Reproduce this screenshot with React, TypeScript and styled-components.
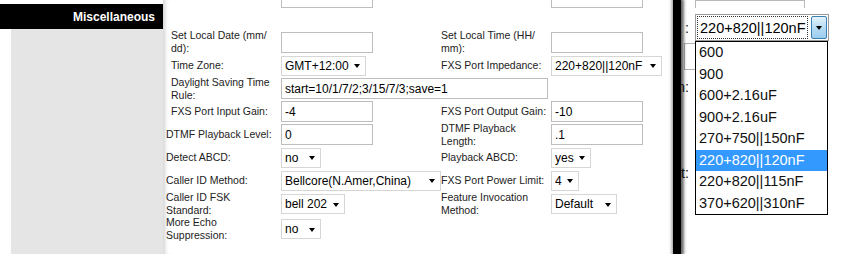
import React from 'react';
import styled, { createGlobalStyle } from 'styled-components';

const GlobalStyle = createGlobalStyle`
  html, body {
    margin: 0;
    padding: 0;
    background: #fff;
  }
  body {
    font-family: "Liberation Sans", Arial, sans-serif;
  }
`;

type Option = { label: string; selected?: boolean };

const impedances: Option[] = [
  { label: '600' },
  { label: '900' },
  { label: '600+2.16uF' },
  { label: '900+2.16uF' },
  { label: '270+750||150nF' },
  { label: '220+820||120nF', selected: true },
  { label: '220+820||115nF' },
  { label: '370+620||310nF' },
];

// 한 줄 또는 두 줄 라벨
const lines = (text: string) =>
  text.split('\n').map((t, i, arr) => (
    <React.Fragment key={i}>
      {t}
      {i < arr.length - 1 && <br />}
    </React.Fragment>
  ));

const Field = ({ w, value }: { w: number; value?: string }) => (
  <TextInput $w={w} defaultValue={value} />
);

const Dropdown = ({ w, value }: { w: number; value: string }) => (
  <SelectBox $w={w}>
    <NativeSelect defaultValue={value}>
      <option>{value}</option>
    </NativeSelect>
    <Caret />
  </SelectBox>
);

const App = () => {
  return (
    <Page>
      <GlobalStyle />
      <Sidebar>
        <SectionTitle>Miscellaneous</SectionTitle>
      </Sidebar>

      <Panel>
        <PrevRow>
          <span />
          <Field w={92} />
          <span />
          <Field w={92} />
        </PrevRow>

        <Form>
          <Label>{lines('Set Local Date (mm/\ndd):')}</Label>
          <Field w={92} />
          <Label>{lines('Set Local Time (HH/\nmm):')}</Label>
          <Field w={92} />

          <Label>Time Zone:</Label>
          <Dropdown w={85} value="GMT+12:00" />
          <Label>FXS Port Impedance:</Label>
          <Dropdown w={111} value="220+820||120nF" />

          <Label>{lines('Daylight Saving Time\nRule:')}</Label>
          <Wide>
            <Field w={267} value="start=10/1/7/2;3/15/7/3;save=1" />
          </Wide>

          <Label>FXS Port Input Gain:</Label>
          <Field w={92} value="-4" />
          <Label>FXS Port Output Gain:</Label>
          <Field w={92} value="-10" />

          <Label $nudge>DTMF Playback Level:</Label>
          <Field w={92} value="0" />
          <Label>{lines('DTMF Playback\nLength:')}</Label>
          <Field w={92} value=".1" />

          <Label $nudge>Detect ABCD:</Label>
          <Dropdown w={40} value="no" />
          <Label>Playback ABCD:</Label>
          <Dropdown w={40} value="yes" />

          <Label $nudge>Caller ID Method:</Label>
          <Dropdown w={160} value="Bellcore(N.Amer,China)" />
          <Label>FXS Port Power Limit:</Label>
          <Dropdown w={28} value="4" />

          <Label $nudge>{lines('Caller ID FSK\nStandard:')}</Label>
          <Dropdown w={64} value="bell 202" />
          <Label>{lines('Feature Invocation\nMethod:')}</Label>
          <Dropdown w={66} value="Default" />

          <Label $nudge>{lines('More Echo\nSuppression:')}</Label>
          <Dropdown w={40} value="no" />
        </Form>
      </Panel>

      <Divider />

      <ZoomPanel>
        <ZRow $h={8} $align="end">
          <span />
          <ZInput $w={110} />
        </ZRow>
        <ZRow $h={27} $mt={6}>
          <Fragment>:</Fragment>
          <ZSelect>
            <ZValue>220+820||120nF</ZValue>
            <ZButton>
              <Caret />
            </ZButton>
          </ZSelect>
        </ZRow>
        <ZRow $h={27} $mt={2}>
          <ZBehind />
        </ZRow>
        <ZRow $h={16} $mt={9}>
          <Fragment>n:</Fragment>
        </ZRow>
        <ZRow $h={16} $mt={70}>
          <Fragment>t:</Fragment>
        </ZRow>

        <ZList>
          {impedances.map((o) => (
            <ZItem key={o.label} $selected={o.selected}>
              {o.label}
            </ZItem>
          ))}
        </ZList>
      </ZoomPanel>
    </Page>
  );
};

export default App;

const Page = styled.div`
  display: flex;
  width: 847px;
  height: 254px;
  overflow: hidden;
  background: #fff;
`;

const Sidebar = styled.aside`
  flex: none;
  width: 163px;
  height: 254px;
  box-sizing: border-box;
  border-top: 4px solid #fff;
  background: linear-gradient(to right, #fff 11px, #e5e5e5 11px);
`;

const SectionTitle = styled.div`
  height: 25px;
  display: flex;
  align-items: center;
  justify-content: flex-end;
  padding-right: 8px;
  background: #000;
  color: #fff;
  font-size: 12px;
  font-weight: bold;
`;

const Panel = styled.main`
  flex: none;
  width: 510px;
  padding-left: 8px;
  box-sizing: border-box;
  background: #fff;
  box-shadow: inset 5px 0 4px -3px rgba(0, 0, 0, 0.18);
`;

const columns = '110px 160px 110px 1fr';

const PrevRow = styled.div`
  display: grid;
  grid-template-columns: ${columns};
  grid-template-rows: 8px;
  align-items: end;
  overflow: hidden;
  margin-bottom: 22px;
`;

const Form = styled.div`
  display: grid;
  grid-template-columns: ${columns};
  grid-template-rows: 24px 23px 23px 23px 23px 23px 23px 24px 26px;
  align-items: center;
`;

const Label = styled.div<{ $nudge?: boolean }>`
  margin-left: ${(p) => (p.$nudge ? '-5px' : '0')};
  font-size: 10.5px;
  line-height: 13px;
  color: #222;
  white-space: nowrap;
`;

const Wide = styled.div`
  grid-column: span 3;
`;

const TextInput = styled.input<{ $w: number }>`
  display: block;
  width: ${(p) => p.$w}px;
  height: 21px;
  box-sizing: border-box;
  margin: 0;
  padding: 0 3px;
  border: 1px solid #bdbdbd;
  border-radius: 0;
  background: #fff;
  font-family: "Liberation Sans", Arial, sans-serif;
  font-size: 12px;
  color: #000;
  outline: none;
`;

const SelectBox = styled.div<{ $w: number }>`
  display: flex;
  align-items: center;
  width: ${(p) => p.$w}px;
  height: 20px;
  box-sizing: border-box;
  border: 1px solid #d6d6d6;
  background: #fff;
`;

const NativeSelect = styled.select`
  flex: 1;
  min-width: 0;
  height: 100%;
  margin: 0;
  padding: 0 0 0 3px;
  border: none;
  background: transparent;
  appearance: none;
  font-family: "Liberation Sans", Arial, sans-serif;
  font-size: 12px;
  color: #000;
  outline: none;
`;

const Caret = styled.span`
  flex: none;
  width: 0;
  height: 0;
  margin: 1px 5px 0 3px;
  border-left: 3.5px solid transparent;
  border-right: 3.5px solid transparent;
  border-top: 4px solid #000;
`;

const Divider = styled.div`
  flex: none;
  width: 8px;
  background: #000;
  box-shadow: -1px 0 3px 1px rgba(0, 0, 0, 0.25), 2px 0 3px 1px rgba(0, 0, 0, 0.55);
  z-index: 1;
`;

const ZoomPanel = styled.section`
  position: relative;
  flex: 1;
  display: flex;
  flex-direction: column;
  background: #fff;
  font-family: "Liberation Sans", Arial, sans-serif;
  font-size: 14.5px;
`;

const ZRow = styled.div<{ $h: number; $mt?: number; $align?: string }>`
  display: grid;
  grid-template-columns: 8px 1fr;
  column-gap: 6px;
  height: ${(p) => p.$h}px;
  margin-top: ${(p) => p.$mt ?? 0}px;
  align-items: ${(p) => p.$align ?? 'center'};
  overflow: hidden;
`;

const Fragment = styled.div`
  display: flex;
  justify-content: flex-end;
  white-space: nowrap;
  color: #222;
  line-height: 16px;
`;

const ZInput = styled.div<{ $w: number }>`
  width: ${(p) => p.$w}px;
  height: 27px;
  box-sizing: border-box;
  border: 1px solid #b8b8b8;
`;

const ZBehind = styled.div`
  grid-column: span 2;
  margin-left: 3px;
  width: 140px;
  height: 27px;
  box-sizing: border-box;
  border: 1px solid #b0b0b0;
`;

const ZSelect = styled.div`
  display: flex;
  width: 134px;
  height: 27px;
  box-sizing: border-box;
  padding: 1px;
  border: 1px solid #9a9a9a;
  background: #fff;
`;

const ZValue = styled.div`
  flex: 1;
  display: flex;
  align-items: center;
  padding-left: 2px;
  border: 1px dotted #333;
  color: #000;
  white-space: nowrap;
  overflow: hidden;
`;

const ZButton = styled.div`
  flex: none;
  width: 16px;
  margin-left: 3px;
  display: flex;
  align-items: center;
  justify-content: center;
  box-sizing: border-box;
  border: 1px solid #3c7fb1;
  border-radius: 2px;
  background: linear-gradient(#e3f3fd, #b7dcf5 50%, #9ccdf0);

  ${Caret} {
    margin: 1px 0 0;
  }
`;

const ZList = styled.ul`
  position: absolute;
  top: 41px;
  left: 14px;
  width: 133px;
  margin: 0;
  padding: 0;
  list-style: none;
  box-sizing: border-box;
  border: 1px solid #000;
  background: #fff;
`;

const ZItem = styled.li<{ $selected?: boolean }>`
  height: 21.5px;
  line-height: 21.5px;
  padding-left: 3px;
  white-space: nowrap;
  background: ${(p) => (p.$selected ? '#3399ff' : '#fff')};
  color: ${(p) => (p.$selected ? '#fff' : '#111')};
`;
